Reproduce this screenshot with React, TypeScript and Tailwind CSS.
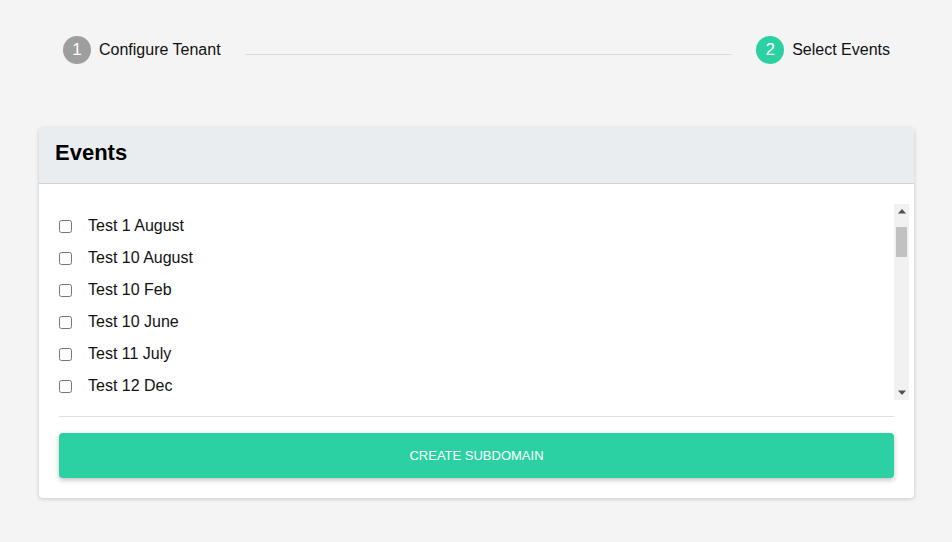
import React from 'react';

const events: string[] = [
  'Test 1 August',
  'Test 10 August',
  'Test 10 Feb',
  'Test 10 June',
  'Test 11 July',
  'Test 12 Dec',
];

const Step: React.FC<{ n: number; label: string; active?: boolean }> = ({ n, label, active }) => (
  <div className="flex items-center gap-2 shrink-0">
    <span
      className={`w-7 h-7 rounded-full flex items-center justify-center text-white text-[17px] ${
        active ? 'bg-[#2bd1a2]' : 'bg-[#9e9e9e]'
      }`}
    >
      {n}
    </span>
    <span className="text-[16px] text-[#111]">{label}</span>
  </div>
);

const FakeScrollbar = () => (
  <div className="w-[15px] shrink-0 bg-[#f1f1f1] flex flex-col items-center">
    <div className="h-[15px] w-full flex items-center justify-center">
      <svg width="8" height="5" viewBox="0 0 8 5">
        <polygon points="4,0 8,4.5 0,4.5" fill="#505050" />
      </svg>
    </div>
    <div className="flex-1 w-full flex justify-center pt-2">
      <div className="w-[11px] h-[30px] bg-[#c1c1c1]" />
    </div>
    <div className="h-[15px] w-full flex items-center justify-center">
      <svg width="8" height="5" viewBox="0 0 8 5">
        <polygon points="0,0.5 8,0.5 4,5" fill="#505050" />
      </svg>
    </div>
  </div>
);

export default function App() {
  return (
    <div className="min-h-screen bg-[#f4f4f4] pl-[39px] pr-[38px] pt-[36px] font-['Liberation_Sans',Arial,sans-serif]">
      <div className="flex items-center gap-6 px-6">
        <Step n={1} label="Configure Tenant" />
        <div className="flex-1 h-px bg-[#dcdcdc] mt-2" />
        <Step n={2} label="Select Events" active />
      </div>

      <div className="mt-16 bg-white rounded-sm shadow-[0_1px_4px_rgba(0,0,0,0.18)]">
        <div className="bg-[#eaedf0] h-[56px] px-4 pb-[7px] flex items-center border-b border-[#cfd3d7]">
          <h2 className="text-[22px] font-bold text-black">Events</h2>
        </div>

        <div className="pt-5 pl-5 pr-[5px] flex h-[216px]">
          <ul className="flex-1 overflow-hidden pt-[6px]">
            {events.map((name) => (
              <li key={name} className="h-8 flex items-center gap-4">
                <input type="checkbox" className="m-0 w-[13px] h-[13px]" />
                <span className="text-[16px] text-[#111]">{name}</span>
              </li>
            ))}
          </ul>
          <FakeScrollbar />
        </div>

        <div className="px-5 pb-5">
          <div className="mt-4 h-px bg-[#e0e0e0]" />
          <button className="mt-4 w-full h-[45px] bg-[#2bd1a2] text-white text-[13px] uppercase rounded-sm shadow-[0_2px_5px_rgba(0,0,0,0.25)]">
            Create Subdomain
          </button>
        </div>
      </div>
    </div>
  );
}
